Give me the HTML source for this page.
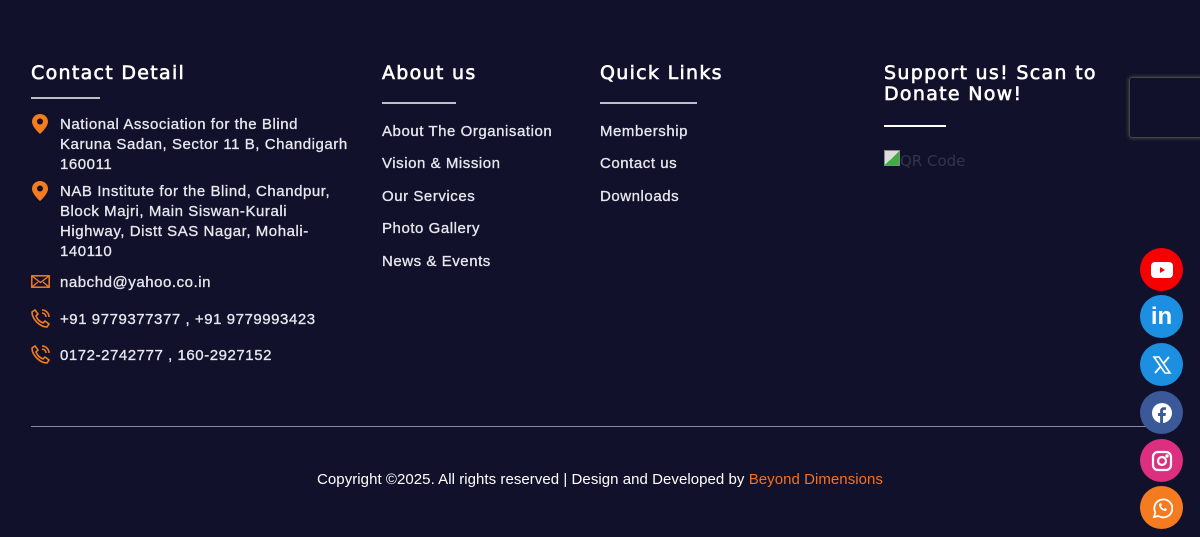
<!DOCTYPE html>
<html><head><meta charset="utf-8"><style>
*{margin:0;padding:0;box-sizing:border-box}
body{width:1200px;height:537px;background:#11112b;position:relative;overflow:hidden;font-family:"Liberation Sans",sans-serif;color:#e8e8ee}
.a{position:absolute}
h3{position:absolute;font-family:"DejaVu Sans",sans-serif;font-weight:normal;font-size:19px;letter-spacing:1.3px;color:#fff;line-height:21px;-webkit-text-stroke:0.6px #fff}
.ul{position:absolute;height:1.5px;background:#bfbfc8}
.t{position:absolute;font-size:15px;line-height:20px;letter-spacing:0.55px;-webkit-text-stroke:0.3px #e8e8ee;white-space:nowrap}
.s{position:absolute;left:1140px;width:43px;height:43px;border-radius:50%;display:flex;align-items:center;justify-content:center}
</style></head><body>
<h3 style="left:31px;top:63px">Contact Detail</h3>
<div class="ul" style="left:31px;top:97px;width:69px"></div>
<h3 style="left:382px;top:63px">About us</h3>
<div class="ul" style="left:382px;top:102px;width:74px"></div>
<h3 style="left:600px;top:63px">Quick Links</h3>
<div class="ul" style="left:600px;top:102px;width:97px"></div>
<h3 style="left:884px;top:63px;width:230px">Support us! Scan to Donate Now!</h3>
<div class="ul" style="left:884px;top:125px;width:62px;background:#fff"></div>
<div class="a" style="left:884px;top:150px;width:16px;height:16px;border:1px solid #888;background:linear-gradient(135deg,#ddd 50%,#4a4 50%)"></div>
<div class="a" style="left:900px;top:152px;font-size:15px;color:#33334a;font-family:'DejaVu Sans',sans-serif">QR Code</div>
<div class="a" style="left:1129px;top:77px;width:80px;height:61px;border:1px solid #444;border-radius:3px;box-shadow:0 0 4px #555"></div>

<svg class="a" style="left:32px;top:114px" width="16" height="20" viewBox="0 0 16 20"><path d="M8 0C3.6 0 0 3.4 0 7.7 0 13 8 20 8 20s8-7 8-12.3C16 3.4 12.4 0 8 0z" fill="#f47b20"/><circle cx="8" cy="7.5" r="3" fill="#11112b"/></svg>
<div class="t" style="left:60px;top:115px">National Association for the Blind<br>Karuna Sadan, Sector 11 B, Chandigarh<br>160011</div>
<svg class="a" style="left:32px;top:181px" width="16" height="20" viewBox="0 0 16 20"><path d="M8 0C3.6 0 0 3.4 0 7.7 0 13 8 20 8 20s8-7 8-12.3C16 3.4 12.4 0 8 0z" fill="#f47b20"/><circle cx="8" cy="7.5" r="3" fill="#11112b"/></svg>
<div class="t" style="left:60px;top:182px">NAB Institute for the Blind, Chandpur,<br>Block Majri, Main Siswan-Kurali<br>Highway, Distt SAS Nagar, Mohali-<br>140110</div>
<svg class="a" style="left:31px;top:275px" width="19" height="13" viewBox="0 0 19 13"><rect x="0.8" y="0.8" width="17.4" height="11.4" fill="none" stroke="#f47b20" stroke-width="1.5"/><path d="M1 1l8.5 6.5L18 1M1 12l6-5M18 12l-6-5" fill="none" stroke="#f47b20" stroke-width="1.3"/></svg>
<div class="t" style="left:60px;top:273px">nabchd@yahoo.co.in</div>
<svg class="a" style="left:31px;top:308px" width="20" height="20" viewBox="0 0 20 20" fill="none" stroke="#f47b20" stroke-width="1.6"><path d="M4 2l3 4-2 2c1 3 4 6 7 7l2-2 4 3-2 3C9 19 1 11 1 4z"/><path d="M11 5a4 4 0 014 4M11 2a7 7 0 017 7"/></svg>
<div class="t" style="left:60px;top:310px">+91 9779377377 , +91 9779993423</div>
<svg class="a" style="left:31px;top:344px" width="20" height="20" viewBox="0 0 20 20" fill="none" stroke="#f47b20" stroke-width="1.6"><path d="M4 2l3 4-2 2c1 3 4 6 7 7l2-2 4 3-2 3C9 19 1 11 1 4z"/><path d="M11 5a4 4 0 014 4M11 2a7 7 0 017 7"/></svg>
<div class="t" style="left:60px;top:346px">0172-2742777 , 160-2927152</div>

<div class="t" style="left:382px;top:122px">About The Organisation</div>
<div class="t" style="left:382px;top:154px">Vision &amp; Mission</div>
<div class="t" style="left:382px;top:187px">Our Services</div>
<div class="t" style="left:382px;top:219px">Photo Gallery</div>
<div class="t" style="left:382px;top:252px">News &amp; Events</div>
<div class="t" style="left:600px;top:122px">Membership</div>
<div class="t" style="left:600px;top:154px">Contact us</div>
<div class="t" style="left:600px;top:187px">Downloads</div>

<div class="a" style="left:31px;top:426px;width:1120px;height:1px;background:#8a8a96"></div>
<div class="a" style="left:0;width:1200px;top:471px;text-align:center;font-size:15px;color:#fff;letter-spacing:0.05px">Copyright ©2025. All rights reserved | Design and Developed by <span style="color:#f4711f">Beyond Dimensions</span></div>

<div class="s" style="top:248px;background:#f70000"><svg width="22" height="16" viewBox="0 0 22 16"><rect width="22" height="16" rx="4" fill="#fff"/><path d="M9 5v6l5-3z" fill="#f70000"/></svg></div>
<div class="s" style="top:295px;background:#1d8fe0"><span style="color:#fff;font:bold 24px 'Liberation Sans',sans-serif">in</span></div>
<div class="s" style="top:343px;background:#1d8fe0"><svg width="20" height="20" viewBox="0 0 20 20"><path d="M2 2h5l11 16h-5z" fill="none" stroke="#fff" stroke-width="1.6"/><path d="M17 2l-6 7M3 18l6-7" stroke="#fff" stroke-width="1.8"/></svg></div>
<div class="s" style="top:391px;background:#3b5998"><svg width="22" height="22" viewBox="0 0 22 22"><circle cx="11" cy="11" r="10" fill="#fff"/><path d="M12 21v-7h2.5l.4-3H12V9.3c0-.8.3-1.4 1.4-1.4H15V5.3c-.3 0-1.2-.1-2.2-.1-2.2 0-3.7 1.3-3.7 3.8V11H7v3h2.1v7z" fill="#3b5998"/></svg></div>
<div class="s" style="top:439px;background:#dc2f7f"><svg width="22" height="22" viewBox="0 0 22 22" fill="none" stroke="#fff" stroke-width="2.2"><rect x="2" y="2" width="18" height="18" rx="5"/><circle cx="11" cy="11" r="4"/><circle cx="16" cy="6" r=".6" fill="#fff"/></svg></div>
<div class="s" style="top:486px;background:#f47b20"><svg width="22" height="22" viewBox="0 0 22 22" fill="none" stroke="#fff" stroke-width="1.8"><path d="M3 20l1.3-4.5A9 9 0 1 1 7.5 19z"/><path d="M8 7c0 4 3 7 7 7l1-2-2-1-1 1c-1.5-.5-2.5-1.5-3-3l1-1-1-2z" fill="#fff" stroke="none"/></svg></div>
</body></html>
